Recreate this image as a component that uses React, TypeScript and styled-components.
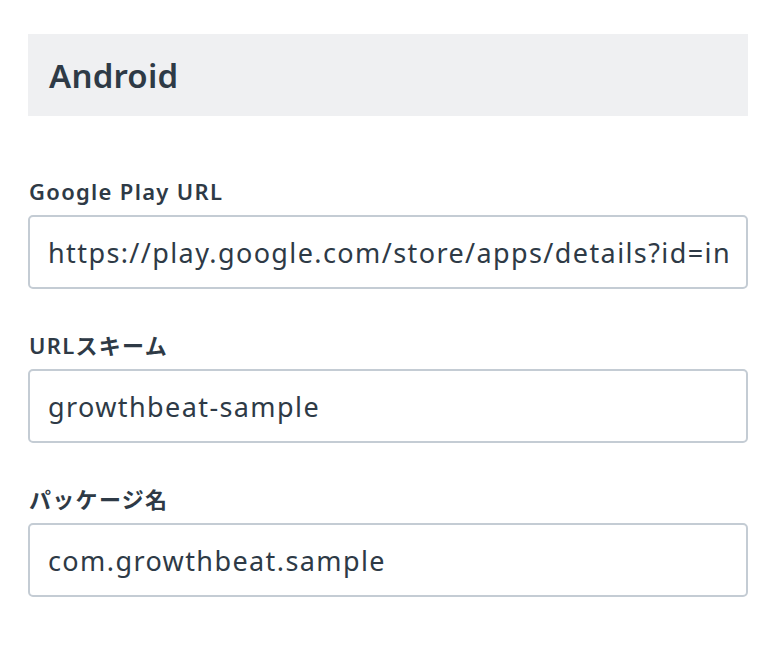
import React from "react";
import styled, { createGlobalStyle } from "styled-components";

const Global = createGlobalStyle`
  html, body { margin: 0; padding: 0; background: #ffffff; }
  body { font-family: "Noto Sans", "Noto Sans CJK JP", sans-serif; color: #2e3a46; }
`;

const Page = styled.div`
  width: 720px;
  padding: 34px 22px 40px 28px;
  display: flex;
  flex-direction: column;
`;

const SectionHeader = styled.div`
  height: 82px;
  background: #eff0f2;
  display: flex;
  align-items: center;
  padding-left: 21px;
  font-size: 33px;
  font-weight: 600;
  letter-spacing: 0.2px;
  color: #2e3a46;
  margin-bottom: 62px;
`;

const Fields = styled.div`
  display: flex;
  flex-direction: column;
  gap: 43px;
`;

const Field = styled.div`
  display: flex;
  flex-direction: column;
  gap: 11px;
`;

const Label = styled.label`
  font-size: 22px;
  font-weight: 600;
  line-height: 26px;
  letter-spacing: 1.3px;
  color: #2e3a46;
  padding-left: 1px;
`;

const Input = styled.input`
  box-sizing: border-box;
  width: 720px;
  height: 74px;
  border: 2px solid #c4ccd4;
  border-radius: 5px;
  padding: 0 18px;
  font-family: "Noto Sans", "Noto Sans CJK JP", sans-serif;
  font-size: 27px;
  letter-spacing: 1.4px;
  color: #2e3a46;
  background: #fff;
  outline: none;
`;

const fields = [
  { label: "Google Play URL", value: "https://play.google.com/store/apps/details?id=in" },
  { label: "URLスキーム", value: "growthbeat-sample" },
  { label: "パッケージ名", value: "com.growthbeat.sample" },
];

export default function App() {
  return (
    <>
      <Global />
      <Page>
        <SectionHeader>Android</SectionHeader>
        <Fields>
          {fields.map((f) => (
            <Field key={f.label}>
              <Label>{f.label}</Label>
              <Input readOnly value={f.value} />
            </Field>
          ))}
        </Fields>
      </Page>
    </>
  );
}
